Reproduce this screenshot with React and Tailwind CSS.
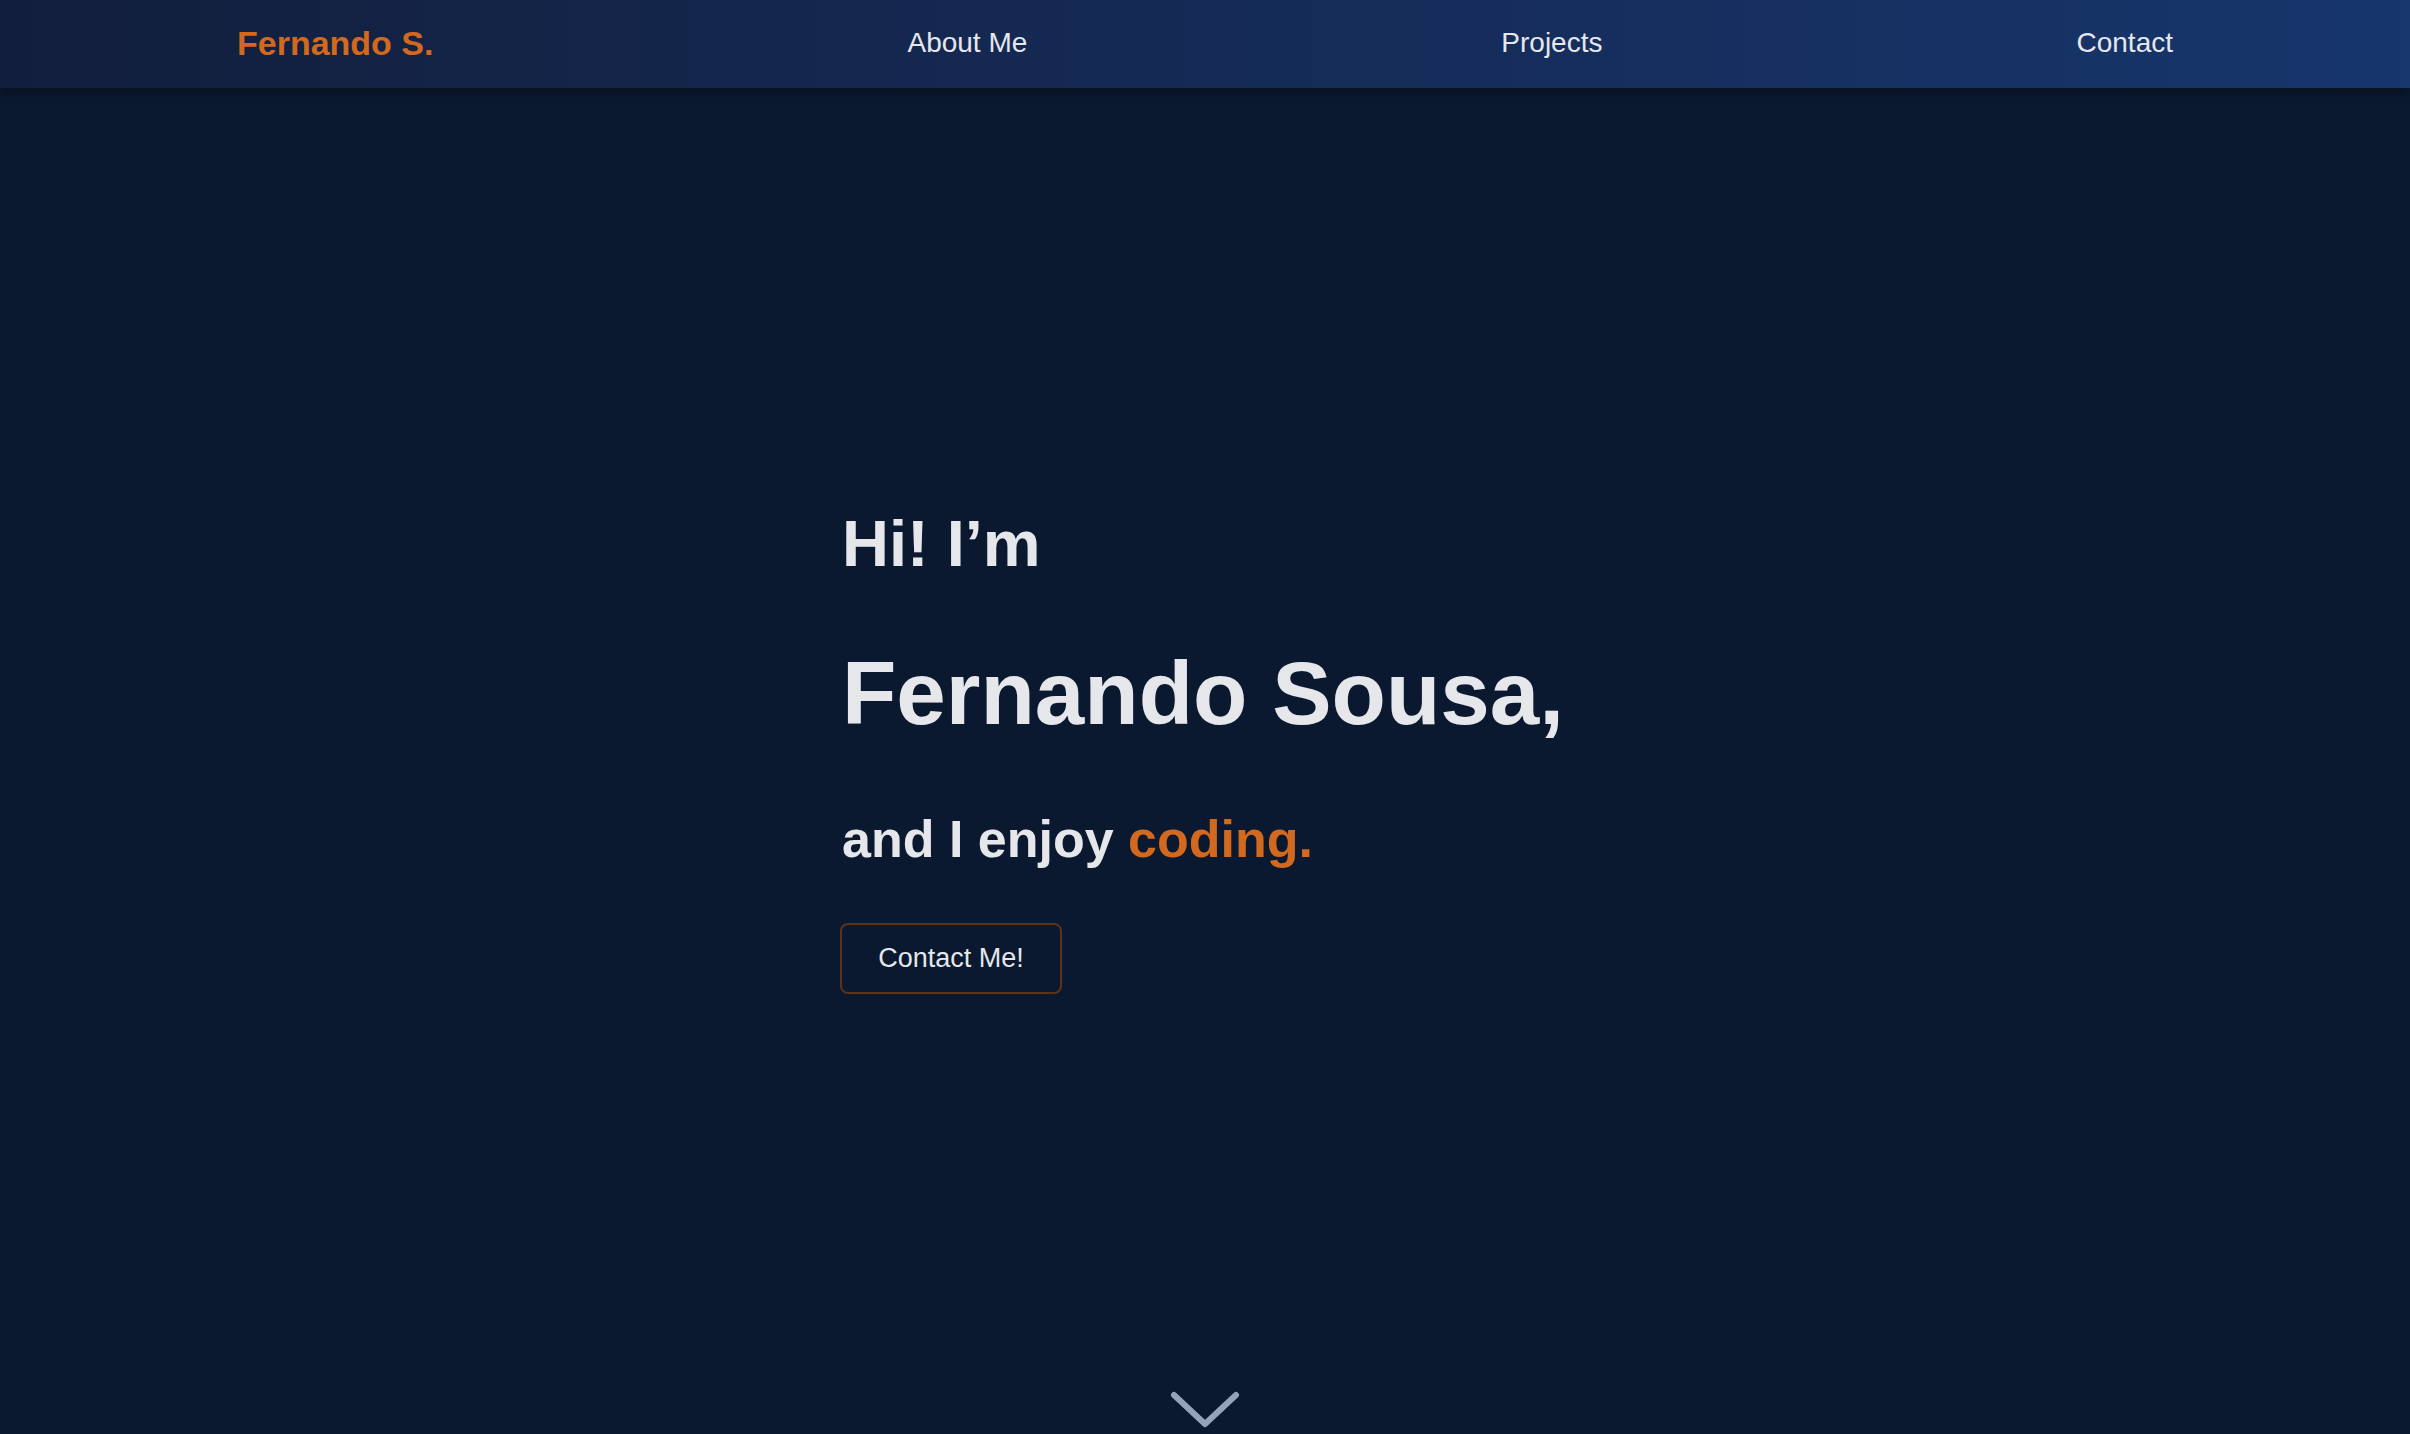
import React from "react";

export default function App() {
  return (
    <div className="min-h-screen w-full bg-[#0a192f] font-['Liberation_Sans',Arial,sans-serif] overflow-hidden">
      <nav className="h-[88px] pb-[2px] w-full flex items-center justify-around bg-gradient-to-r from-[#121f3c] via-[#152a56] to-[#17366c] shadow-[0_4px_10px_rgba(0,0,0,0.35)]">
        <a className="text-[34px] font-bold text-[#d2691e] whitespace-nowrap">Fernando S.</a>
        <a className="text-[28px] text-gray-200 whitespace-nowrap">About Me</a>
        <a className="text-[28px] text-gray-200 whitespace-nowrap">Projects</a>
        <a className="text-[28px] text-gray-200 whitespace-nowrap">Contact</a>
      </nav>

      <main className="flex flex-col items-center">
        <div className="w-[726px] mt-[423px] flex flex-col items-start text-gray-200">
          <h2 className="text-[65px] leading-none font-bold whitespace-nowrap">Hi! I’m</h2>
          <h1 className="mt-[73px] text-[89px] leading-none font-bold whitespace-nowrap">Fernando Sousa,</h1>
          <p className="mt-[75px] text-[52px] leading-none font-bold whitespace-nowrap">
            and I enjoy <span className="text-[#d2691e]">coding.</span>
          </p>
          <button className="mt-[58px] -ml-[2px] w-[222px] h-[71px] flex items-center justify-center rounded-lg border-2 border-[#5c3318] text-[27px] text-gray-200 bg-transparent">
            Contact Me!
          </button>
        </div>

        <div className="mt-[395px] flex justify-center">
          <svg width="74" height="42" viewBox="0 0 74 42" fill="none">
            <polyline points="6,6 37,35 68,6" stroke="#94a3b8" strokeWidth="6" strokeLinecap="round" strokeLinejoin="round" />
          </svg>
        </div>
      </main>
    </div>
  );
}
